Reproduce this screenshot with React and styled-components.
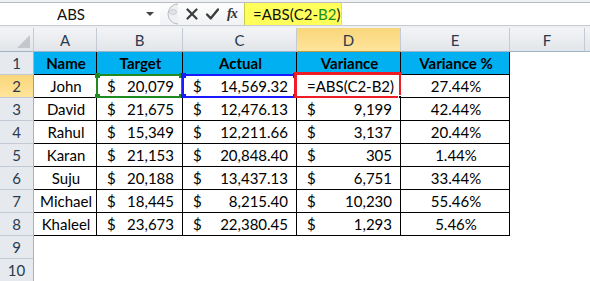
import React from "react";
import styled, { createGlobalStyle, css } from "styled-components";

const Global = createGlobalStyle`
  html, body { margin: 0; padding: 0; background: #fff; }
  body { font-family: Lato, "Liberation Sans", sans-serif; }
  * { box-sizing: border-box; }
`;

const Page = styled.div`
  width: 590px;
  height: 281px;
  overflow: hidden;
  background: #fff;
  display: flex;
  flex-direction: column;
`;

/* ---------- formula bar ---------- */
const Bar = styled.div`
  height: 28px;
  background: #eef0f3;
  padding: 2px 0 2px 0;
  display: flex;
`;

const BarInner = styled.div`
  flex: 1;
  display: flex;
  background: #fff;
  border-top: 1px solid #b8bcc2;
  border-bottom: 1px solid #c8ccd2;
`;

const NameBox = styled.div`
  width: 160px;
  display: flex;
  align-items: center;
  font-size: 15px;
  color: #111;
`;

const NameText = styled.span`
  flex: 1;
  text-align: center;
  padding-right: 4px;
`;

const Caret = styled.span`
  width: 0;
  height: 0;
  border-left: 4px solid transparent;
  border-right: 4px solid transparent;
  border-top: 4px solid #444;
  margin-right: 6px;
`;

const Tools = styled.div`
  width: 84px;
  display: flex;
  align-items: center;
  background: linear-gradient(#fdfdfd, #f1f2f4);
`;

const Grip = styled.svg`
  width: 18px;
  height: 22px;
`;

const ToolIcon = styled.svg`
  width: ${(p) => p.$w}px;
  height: 12px;
  margin-left: ${(p) => p.$gap}px;
`;

const Fx = styled.span`
  margin-left: 8px;
  font-family: "Liberation Serif", "DejaVu Serif", serif;
  font-style: italic;
  font-weight: bold;
  font-size: 14px;
  color: #333;
  letter-spacing: -1px;
`;

const FormulaBox = styled.div`
  width: 98px;
  background: #ffff5c;
  border-left: 1px solid #c9c94a;
  border-right: 1px solid #dede7a;
  display: flex;
  align-items: center;
  padding-left: 8px;
  font-size: 15px;
  color: #111;
`;

const Ref = styled.span`
  color: ${(p) => p.$c};
`;

const Cursor = styled.span`
  width: 1px;
  height: 17px;
  background: #000;
  margin-left: 1px;
`;

const BarRest = styled.div`
  flex: 1;
`;

/* ---------- sheet ---------- */
const Sheet = styled.div`
  display: grid;
  grid-template-columns: 34px 63px 86px 114px 104px 109px 75px 1fr;
  grid-template-rows: 24px repeat(10, 23px);
`;

const headerBase = css`
  display: flex;
  align-items: center;
  justify-content: center;
  font-size: 15px;
  color: #2a3a4e;
  border-right: 1px solid #9eb3c9;
  border-bottom: 1px solid #9eb3c9;
`;

const ColHead = styled.div`
  ${headerBase}
  border-right-color: #c3cad3;
  background: ${(p) =>
    p.$active
      ? "linear-gradient(#f8d67a, #ffe49b)"
      : "linear-gradient(#f3f4f6, #e2e5e9)"};
  border-bottom-color: ${(p) => (p.$active ? "#c09a3b" : "#9eb3c9")};
`;

const Corner = styled.div`
  ${headerBase}
  border-right-color: #c3cad3;
  background: linear-gradient(#f3f4f6, #e2e5e9);
  position: relative;
`;

const CornerTri = styled.div`
  position: absolute;
  right: 3px;
  bottom: 3px;
  width: 0;
  height: 0;
  border-left: 13px solid transparent;
  border-bottom: 13px solid #c4c8cd;
`;

const RowHead = styled.div`
  ${headerBase}
  background: ${(p) => (p.$active ? "linear-gradient(#f8d67a, #ffe49b)" : "#e6e9ee")};
  border-right-color: ${(p) => (p.$active ? "#c09a3b" : "#9eb3c9")};
  border-bottom-color: #c3cad3;
`;

const Cell = styled.div`
  position: relative;
  display: flex;
  align-items: center;
  font-size: 15px;
  color: #000;
  white-space: nowrap;
  justify-content: ${(p) => p.$align || "center"};
  padding: 0 8px 0 10px;
  border-right: 1px solid ${(p) => (p.$table ? "#000" : "transparent")};
  border-bottom: 1px solid ${(p) => (p.$table ? "#000" : "transparent")};
  background: ${(p) => (p.$head ? "#00b0f0" : "#fff")};
  font-weight: ${(p) => (p.$head ? "bold" : "normal")};
`;

const Dollar = styled.span`
  flex: 1;
`;

const Marquee = styled.div`
  position: absolute;
  left: -1px;
  top: -1px;
  right: -1px;
  bottom: -1px;
  border: 2px solid ${(p) => p.$c};
  pointer-events: none;
`;

const Handle = styled.span`
  position: absolute;
  width: 5px;
  height: 5px;
  background: ${(p) => p.$c};
  ${(p) => (p.$t ? "top: -3px;" : "bottom: -3px;")}
  ${(p) => (p.$l ? "left: -3px;" : "right: -3px;")}
`;

const Active = styled.div`
  position: absolute;
  left: -3px;
  top: -3px;
  right: -2px;
  bottom: -2px;
  border: 3px solid #ee1c25;
  pointer-events: none;
`;

const FillHandle = styled.span`
  position: absolute;
  right: -4px;
  bottom: -4px;
  width: 5px;
  height: 5px;
  background: #000;
  border: 1px solid #fff;
`;

const cols = ["A", "B", "C", "D", "E", "F", ""];

const rows = [
  ["John", "20,079", "14,569.32", null, "27.44%"],
  ["David", "21,675", "12,476.13", "9,199", "42.44%"],
  ["Rahul", "15,349", "12,211.66", "3,137", "20.44%"],
  ["Karan", "21,153", "20,848.40", "305", "1.44%"],
  ["Suju", "20,188", "13,437.13", "6,751", "33.44%"],
  ["Michael", "18,445", "8,215.40", "10,230", "55.46%"],
  ["Khaleel", "23,673", "22,380.45", "1,293", "5.46%"],
];

function Corners({ c }) {
  return (
    <>
      <Handle $c={c} $t $l />
      <Handle $c={c} $t />
      <Handle $c={c} $l />
      <Handle $c={c} />
    </>
  );
}

function Money({ v, children }) {
  return (
    <Cell $table $align="space-between">
      <Dollar>$</Dollar>
      <span>{v}</span>
      {children}
    </Cell>
  );
}

export default function App() {
  return (
    <Page>
      <Global />
      <Bar>
        <BarInner>
          <NameBox>
            <NameText>ABS</NameText>
            <Caret />
          </NameBox>
          <Tools>
            <Grip viewBox="0 0 18 22">
              <path d="M18 1 A10 10 0 0 0 18 21" fill="#eef0f2" stroke="#b7bcc3" strokeWidth="1" />
              <ellipse cx="13" cy="9" rx="3.5" ry="2.5" fill="#dfe2e6" stroke="#c4c8ce" strokeWidth="0.8" />
            </Grip>
            <ToolIcon $w={12} $gap={8} viewBox="0 0 12 12">
              <path d="M1.5 1.5 L10.5 10.5 M10.5 1.5 L1.5 10.5" stroke="#3c3c3c" strokeWidth="2.2" strokeLinecap="round" />
            </ToolIcon>
            <ToolIcon $w={13} $gap={8} viewBox="0 0 13 12">
              <path d="M1 6.5 L4.8 10.3 L12 1.5" fill="none" stroke="#3c3c3c" strokeWidth="2.4" strokeLinecap="round" strokeLinejoin="round" />
            </ToolIcon>
            <Fx>fx</Fx>
          </Tools>
          <FormulaBox>
            =ABS(<Ref $c="#111">C2</Ref>-<Ref $c="#1e8c1e">B2</Ref>)
            <Cursor />
          </FormulaBox>
          <BarRest />
        </BarInner>
      </Bar>
      <Sheet>
        <Corner>
          <CornerTri />
        </Corner>
        {cols.map((c, i) => (
          <ColHead key={i} $active={c === "D"}>
            {c}
          </ColHead>
        ))}

        <RowHead>1</RowHead>
        <Cell $table $head>Name</Cell>
        <Cell $table $head>Target</Cell>
        <Cell $table $head>Actual</Cell>
        <Cell $table $head>Variance</Cell>
        <Cell $table $head>Variance %</Cell>
        <Cell />
        <Cell />

        {rows.map((r, i) => {
          const n = i + 2;
          const first = n === 2;
          return (
            <React.Fragment key={n}>
              <RowHead $active={first}>{n}</RowHead>
              <Cell $table>{r[0]}</Cell>
              <Money v={r[1]}>
                {first && (
                  <Marquee $c="#1f8a1f">
                    <Corners c="#1f8a1f" />
                  </Marquee>
                )}
              </Money>
              <Money v={r[2]}>
                {first && (
                  <Marquee $c="#1a1aff">
                    <Corners c="#1a1aff" />
                  </Marquee>
                )}
              </Money>
              {first ? (
                <Cell $table $align="flex-start">
                  =ABS(C2-B2)
                  <Active>
                    <FillHandle />
                  </Active>
                </Cell>
              ) : (
                <Money v={r[3]} />
              )}
              <Cell $table>{r[4]}</Cell>
              <Cell />
              <Cell />
            </React.Fragment>
          );
        })}

        {[9, 10].map((n) => (
          <React.Fragment key={n}>
            <RowHead>{n}</RowHead>
            {cols.map((_, i) => (
              <Cell key={i} />
            ))}
          </React.Fragment>
        ))}
      </Sheet>
    </Page>
  );
}
